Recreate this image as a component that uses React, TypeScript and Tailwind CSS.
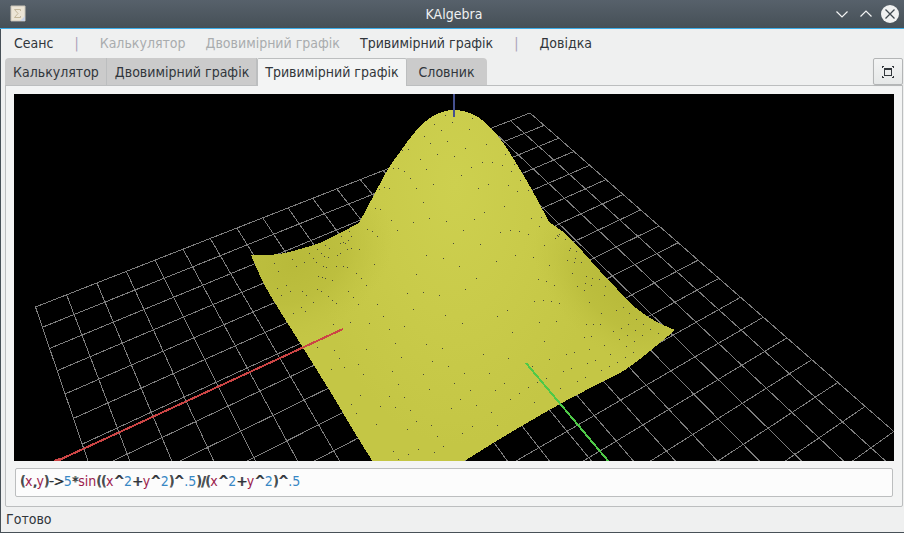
import React, { useState } from "react";

const GRID_CELLS = 20;

/** Projects a corner of the ground grid onto the drawing surface. */
function project(u: number, v: number): [number, number] {
  const w = 1 + 0.013783 * u - 0.02218 * v;
  return [(35.5 + 32.03 * u + 5.96 * v) / w, (307 - 8.1425 * u + 13 * v) / w];
}

const gridPath = Array.from({ length: GRID_CELLS + 1 }, (_, i) => {
  const [ax, ay] = project(i, 0);
  const [bx, by] = project(i, GRID_CELLS);
  const [cx, cy] = project(0, i);
  const [dx, dy] = project(GRID_CELLS, i);
  return `M${ax} ${ay}L${bx} ${by}M${cx} ${cy}L${dx} ${dy}`;
}).join("");

/** The outline of the surface, as smooth edges that meet in corners. */
const SURFACE_EDGES = [
  "251,255 268,255 285,253 300,249 320,243 340,233 359,223",
  "359,223 374,195 388,169 400,152 415,132 433,116 455,110 478,117 498,136 513,158 532,190 549,222",
  "549,222 567,235 583,252 600,271 617,289 636,308 655,321 675,330",
  "675,330 650,351 625,370 600,383 560,404 520,427 490,445 463,462",
  "463,462 373,462",
  "373,462 358,438 343,413 328,388 300,343 275,303 262,280 251,255",
];

const surfacePath = SURFACE_EDGES.map((edge, index) => {
  const p = edge.split(" ").map((pair) => pair.split(",").map(Number));
  const at = (i: number) => p[Math.max(0, Math.min(p.length - 1, i))];
  const curves = p.slice(1).map((end, i) => {
    const [before, start, after] = [at(i - 1), p[i], at(i + 2)];
    const c1 = start.map((s, k) => s + (end[k] - before[k]) / 6);
    const c2 = end.map((e, k) => e - (after[k] - start[k]) / 6);
    return `C${c1} ${c2} ${end}`;
  });
  return (index === 0 ? `M${p[0]}` : "") + curves.join("");
}).join("");

/** Mesh vertices, by patch: origin, then offsets in thirds of a unit. */
const PATCHES: { x: number; y: number; points: string }[] = [
  {
    x: 300,
    y: 90,
    points:
      "436,76 457,97 403,103 424,121 508,118 517,85 373,139 442,154 391,160 559,163 325,178 307,181 412,193 463,199 496,175 616,193 361,208 547,217 577,217 607,226 634,244 643,223 379,238 514,232 280,235 295,235 313,244 331,265 484,256 661,271 400,283 565,283 625,286 535,295 349,295 652,304 685,300 268,295 253,292 238,298 370,337 613,349 553,367 226,355 241,358 388,385 340,397 439,394 523,388 694,385 724,382 274,391 718,409 292,421 490,421 202,418 217,424 232,439 601,427 631,421 658,424 685,433 154,439 148,424 124,439 145,451 130,457 121,460 136,460 772,436 778,433 775,439 766,445 796,448 460,460 541,463 733,466 76,466 88,475 52,478 142,478 154,475 178,478 64,490 28,490 73,499 85,502 112,496 121,490 40,505 13,517 49,517 70,529 79,532 109,529 130,529 142,532 379,496 430,505 646,496 700,502 589,514 748,526 223,523 478,529 811,475 808,481 829,484 802,511 823,517 844,517 826,505",
  },
  {
    x: 300,
    y: 270,
    points:
      "55,19 67,22 76,25 97,31 169,10 184,25 199,46 349,13 529,25 715,28 739,34 763,46 817,10 859,19 877,25 856,40 832,49 874,46 853,61 898,28 52,58 64,64 7,64 19,76 85,79 97,91 109,100 40,97 4,112 16,124 145,64 160,82 175,103 232,103 322,70 370,67 418,76 496,58 703,94 730,91 754,94 778,100 868,97 340,118 250,139 436,136 592,139 622,121 208,160 151,157 100,163 487,160 718,157 769,154 859,163 880,163 313,169 268,178 637,187 853,202 874,199 733,214 286,220 379,223 427,235 199,238 103,241 52,232 868,238 823,247 799,253 550,253 304,262 118,265 625,265 748,268 886,271 862,280 397,274 175,283 133,292 94,298 445,289 697,289 814,295 790,304 277,304 190,313 370,313 493,310 568,310 739,325 856,322 832,334 712,337 613,340 463,340 295,343 685,352 388,358 781,355 511,361 586,361 658,370 181,376 268,379 313,382 481,388 631,388 703,397 154,403 241,409 286,412 529,406 454,415 331,421 169,430 574,427 349,454 229,463 394,466 517,469 592,466 322,478 487,490 412,499 430,529 355,538 280,544 403,547 325,553 295,568",
  },
  {
    x: 600,
    y: 270,
    points:
      "16,49 13,76 70,112 49,121 88,130 4,130 109,148 85,163 130,163 1,163 64,175 40,184 106,181 151,178 175,190 82,196 127,196 58,208 103,214 13,226 79,229 100,247 31,253 76,262 52,277 28,289 4,301",
  },
  { x: 0, y: 90, points: "823,520 877,508 889,529 835,544" },
  { x: 0, y: 270, points: "835,4 859,46 832,55 871,64 844,76 880,130" },
];

const vertexPath = PATCHES.map((patch) =>
  patch.points
    .split(" ")
    .map((pair) => {
      const [x, y] = pair.split(",").map(Number);
      return `M${patch.x + Math.floor(x / 3)} ${patch.y + Math.floor(y / 3)}h1v1h-1z`;
    })
    .join(""),
).join("");

function Plot() {
  return (
    <svg
      role="img"
      aria-label="Тривимірний графік"
      viewBox="14 94 880 367"
      preserveAspectRatio="xMidYMid slice"
      className="h-[367px] min-h-0 w-full flex-auto bg-black"
    >
      <defs>
        <radialGradient id="peak" gradientUnits="userSpaceOnUse" cx="0" cy="0" r="1" gradientTransform="translate(455 185) scale(150 260)">
          <stop offset="0" stopColor="#cdd04f" />
          <stop offset="0.5" stopColor="#c9cb4a" />
          <stop offset="1" stopColor="#c4c645" />
        </radialGradient>
        <radialGradient id="leftWing" gradientUnits="userSpaceOnUse" cx="0" cy="0" r="1" gradientTransform="translate(295 262) rotate(-30) scale(105 75)">
          <stop offset="0" stopColor="#b8ba3a" />
          <stop offset="0.5" stopColor="#babc3c" stopOpacity="0.75" />
          <stop offset="1" stopColor="#c0c241" stopOpacity="0" />
        </radialGradient>
        <radialGradient id="rightWing" gradientUnits="userSpaceOnUse" cx="0" cy="0" r="1" gradientTransform="translate(618 290) rotate(45) scale(105 58)">
          <stop offset="0" stopColor="#b8ba3a" />
          <stop offset="0.5" stopColor="#babc3c" stopOpacity="0.75" />
          <stop offset="1" stopColor="#c0c241" stopOpacity="0" />
        </radialGradient>
      </defs>
      <g shapeRendering="crispEdges">
        <path d={gridPath} fill="none" stroke="#7d7d7d" strokeWidth="1" />
        <path d={surfacePath} fill="url(#peak)" />
        <path d={surfacePath} fill="url(#leftWing)" />
        <path d={surfacePath} fill="url(#rightWing)" />
        <path d={vertexPath} fill="#4b4b3c" />
        <path d="M454 94V117" stroke="#45508f" strokeWidth="2" />
        <path d="M343 329L57 461M54 461l5 -2l2 2" fill="none" stroke="#cc4545" strokeWidth="2" />
        <path d="M526 363L609 462" stroke="#4fc948" strokeWidth="2" />
      </g>
    </svg>
  );
}

function TitleBar() {
  return (
    <header className="grid h-[29px] shrink-0 grid-cols-[1fr_auto_1fr] items-center border-b border-[#3daee9] bg-linear-to-b from-[#57616b] to-[#465057] pl-1 text-[#eff0f1]">
      <svg viewBox="0 0 16 18" className="ml-[6px] h-[18px] w-4" aria-hidden="true">
        <path d="M1 1h14v15H1z" fill="#ece5d6" stroke="#c9c4b8" />
        <path d="M15 11v5h-5z" fill="#c7d2e4" />
        <path d="M1 16.500h14" stroke="#7f8285" />
        <path d="M10.500 6V4.500H4.500L8 8.500 4.500 12.500H10.500V11" fill="none" stroke="#c3b79b" />
      </svg>
      <h1 className="text-sm">KAlgebra</h1>
      <div className="flex items-center justify-end gap-[6px] pr-[5px]">
        <button type="button" aria-label="Згорнути" className="grid size-[18px] place-items-center">
          <svg viewBox="0 0 18 18" className="size-[18px]" fill="none" stroke="#f4f5f5" strokeWidth="1.200">
            <path d="M3.500 6.500L9 12l5.500-5.500" />
          </svg>
        </button>
        <button type="button" aria-label="Розгорнути" className="grid size-[18px] place-items-center">
          <svg viewBox="0 0 18 18" className="size-[18px]" fill="none" stroke="#f4f5f5" strokeWidth="1.200">
            <path d="M3.500 11.500L9 6l5.500 5.500" />
          </svg>
        </button>
        <button type="button" aria-label="Закрити" className="grid size-[18px] place-items-center rounded-full bg-[#f0f1f1]">
          <svg viewBox="0 0 18 18" className="size-[18px]" fill="none" stroke="#3f484f" strokeWidth="1.300">
            <path d="M4.500 4.500l9 9M13.500 4.500l-9 9" />
          </svg>
        </button>
      </div>
    </header>
  );
}

function MenuBar() {
  const divider = <span aria-hidden="true" className="px-px text-[#aaa0b8]">|</span>;
  return (
    <nav className="flex h-[29px] shrink-0 items-center gap-5 px-[13px] pb-[2px]">
      <button type="button">Сеанс</button>
      {divider}
      <button type="button" disabled className="text-[#a9acae]">Калькулятор</button>
      <button type="button" disabled className="text-[#a9acae]">Двовимірний графік</button>
      <button type="button">Тривимірний графік</button>
      {divider}
      <button type="button">Довідка</button>
    </nav>
  );
}

const TABS = ["Калькулятор", "Двовимірний графік", "Тривимірний графік", "Словник"];

function TabRow() {
  const [active, setActive] = useState(2);
  return (
    <div className="z-10 -mb-px flex h-[28px] shrink-0 items-stretch justify-between">
      <div role="tablist" className="flex">
        {TABS.map((tab, i) => (
          <button
            key={tab}
            type="button"
            role="tab"
            aria-selected={i === active}
            onClick={() => setActive(i)}
            className={
              i === active
                ? "rounded-t-xs border-x border-t border-[#bcbebf] bg-[#f3f4f4] px-[7px] pb-[2px]"
                : "border-r border-b border-[#bcbebf] bg-[#cbcbcb] pr-[7px] pl-2 first:rounded-tl-sm last:rounded-tr-sm last:border-r-0 last:px-3"
            }
          >
            {tab}
          </button>
        ))}
      </div>
      <button
        type="button"
        aria-label="На весь екран"
        className="mb-px grid w-[30px] place-items-center rounded-xs border border-[#b3b5b6] bg-linear-to-b from-[#f3f4f4] to-[#e6e8e8] shadow-xs"
      >
        <svg viewBox="0 0 12 12" className="size-3" fill="none" stroke="#31363b" shapeRendering="crispEdges">
          <path d="M2.500 3v6.500h7V3" />
          <path d="M2 3h8" strokeWidth="2" />
          <path d="M0 .5h2M.5 0v2M10 .5h2M11.500 0v2M0 11.500h2M.5 10v2M10 11.500h2M11.500 10v2" />
        </svg>
      </button>
    </div>
  );
}

function colourOf(token: string) {
  if (/^[a-z]+$/.test(token)) return "text-[#9b1b4b]";
  if (/^[\d.]+$/.test(token)) return "text-[#3787c4]";
  return "text-[#31363b] [text-shadow:1px_0_currentColor]";
}

function FormulaField() {
  const [formula, setFormula] = useState("(x,y)->5*sin((x^2+y^2)^.5)/(x^2+y^2)^.5");
  const tokens = formula.match(/[a-z]+|[\d.]+|[^a-z\d.]+/g) ?? [];
  return (
    <div className="relative mx-px mt-[7px] h-[29px] shrink-0 rounded-xs border border-[#bcbebf] bg-[#fcfcfc]">
      <div aria-hidden="true" className="flex h-full items-center overflow-hidden whitespace-pre px-1 pb-[3px]">
        {tokens.map((token, i) => (
          <span key={i} className={colourOf(token)}>{token}</span>
        ))}
      </div>
      <input
        type="text"
        aria-label="Функція"
        spellCheck={false}
        value={formula}
        onChange={(event) => setFormula(event.target.value)}
        className="absolute inset-0 w-full bg-transparent px-1 pb-[3px] text-transparent caret-[#31363b] outline-none"
      />
    </div>
  );
}

export default function App() {
  return (
    <div className="flex min-h-screen flex-col border-b border-[#475057] bg-[#eff0f0] font-['DejaVu_Sans_Condensed','DejaVu_Sans',sans-serif] text-sm text-[#31363b]">
      <TitleBar />
      <div className="flex grow flex-col border-l border-[#475057]">
        <MenuBar />
        <main className="flex grow flex-col pl-1 pr-px">
          <TabRow />
          <section className="flex grow flex-col rounded-b-xs border border-[#bcbebf] bg-[#f3f4f4] px-2 pt-2 pb-[9px]">
            <Plot />
            <FormulaField />
          </section>
        </main>
        <footer className="flex h-[25px] shrink-0 items-center px-[5px] pb-[2px]">Готово</footer>
      </div>
    </div>
  );
}
